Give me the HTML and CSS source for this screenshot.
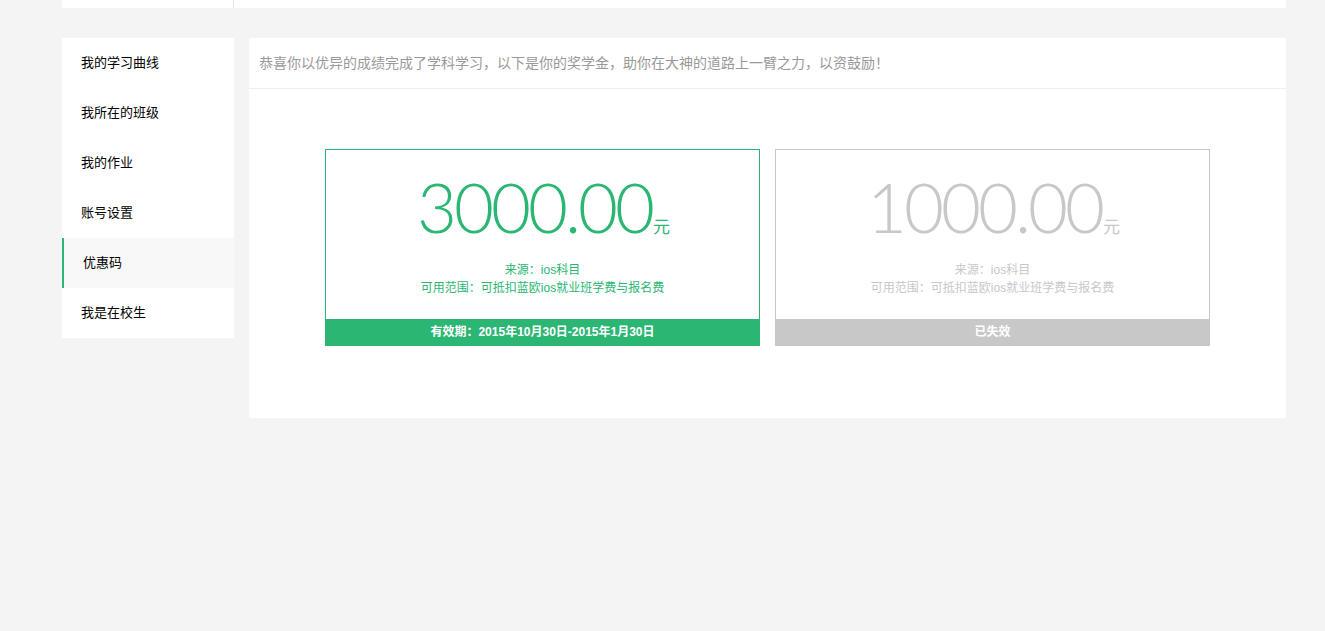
FILE: index.html
```html
<!DOCTYPE html>
<html lang="zh">
<head>
<meta charset="utf-8">
<title>优惠码</title>
<link rel="stylesheet" href="styles.css">
</head>
<body>
<div class="page">
  <div class="topbar"><div class="topbar-left"></div><div class="topbar-right"></div></div>
  <div class="content">
    <ul class="sidebar">
      <li class="nav-item">我的学习曲线</li>
      <li class="nav-item">我所在的班级</li>
      <li class="nav-item">我的作业</li>
      <li class="nav-item">账号设置</li>
      <li class="nav-item active">优惠码</li>
      <li class="nav-item">我是在校生</li>
    </ul>
    <div class="main">
      <div class="main-header">恭喜你以优异的成绩完成了学科学习，以下是你的奖学金，助你在大神的道路上一臂之力，以资鼓励！</div>
      <div class="cards">
        <div class="card valid">
          <div class="card-body">
            <div class="amount"><span class="num">3000.00</span><span class="unit">元</span></div>
            <div class="info">来源：ios科目</div>
            <div class="info">可用范围：可抵扣蓝欧ios就业班学费与报名费</div>
          </div>
          <div class="card-foot">有效期：2015年10月30日-2015年1月30日</div>
        </div>
        <div class="card expired">
          <div class="card-body">
            <div class="amount"><span class="num">1000.00</span><span class="unit">元</span></div>
            <div class="info">来源：ios科目</div>
            <div class="info">可用范围：可抵扣蓝欧ios就业班学费与报名费</div>
          </div>
          <div class="card-foot">已失效</div>
        </div>
      </div>
    </div>
  </div>
</div>
</body>
</html>
```

FILE: styles.css
```css
* { box-sizing: border-box; }
html, body { margin: 0; padding: 0; }
body {
  background: #f4f4f4;
  font-family: "Liberation Sans", "Noto Sans CJK SC", sans-serif;
  color: #000;
}
.page {
  width: 1224px;
  margin-left: 62px;
}
.topbar {
  height: 8px;
  display: flex;
  background: #fff;
}
.topbar-left {
  width: 172px;
  border-right: 1px solid #e3e3e3;
}
.content {
  display: flex;
  align-items: flex-start;
  gap: 15px;
  margin-top: 30px;
}
.sidebar {
  list-style: none;
  margin: 0;
  padding: 0;
  width: 172px;
  background: #fff;
}
.nav-item {
  height: 50px;
  line-height: 50px;
  padding-left: 19px;
  font-size: 13px;
  color: #000;
}
.nav-item.active {
  background: #f8f8f8;
  border-left: 2px solid #2bb673;
  padding-left: 19px;
}
.main {
  flex: 1;
  background: #fff;
  height: 380px;
}
.main-header {
  height: 51px;
  line-height: 50px;
  padding-left: 10px;
  font-size: 14px;
  color: #999;
  border-bottom: 1px solid #efefef;
}
.cards {
  display: flex;
  justify-content: center;
  gap: 15px;
  padding-top: 60px;
}
.card {
  width: 435px;
  height: 197px;
  border: 1px solid #2bb673;
  display: flex;
  flex-direction: column;
}
.card-body {
  flex: 1;
  text-align: center;
}
.amount {
  margin-top: 15px;
  height: 84px;
  display: flex;
  justify-content: center;
  align-items: baseline;
  padding-left: 2px;
}
.num {
  font-family: "Lato", sans-serif;
  font-weight: 300;
  font-size: 69px;
  line-height: 84px;
  letter-spacing: -3px;
}
.unit {
  font-size: 17px;
  margin-left: 1px;
  font-family: "Noto Sans CJK SC", sans-serif;
}
.info {
  font-size: 12px;
  line-height: 18px;
}
.amount + .info { margin-top: 12px; }
.card-foot {
  height: 26px;
  line-height: 26px;
  text-align: center;
  color: #fff;
  font-size: 12px;
  font-weight: bold;
}
.valid .amount, .valid .info { color: #2bb673; }
.valid .card-foot { background: #2bb673; }
.expired { border-color: #c8c8c8; }
.expired .amount, .expired .info { color: #c8c8c8; }
.expired .card-foot { background: #c8c8c8; }
```
